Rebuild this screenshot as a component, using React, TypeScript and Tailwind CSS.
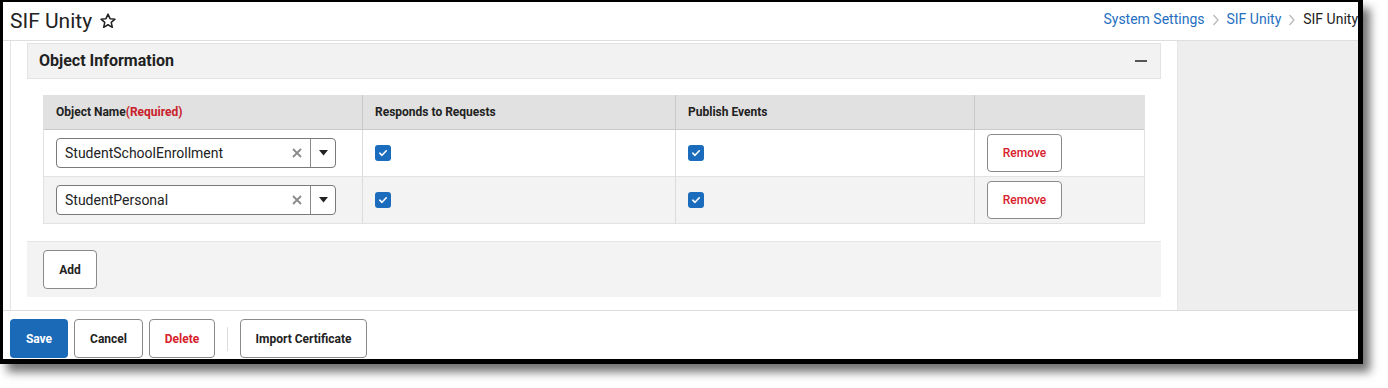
import React from "react";

const font = { fontFamily: "Roboto, 'Noto Sans', Arial, sans-serif" };

function Check() {
  return (
    <div className="w-[16px] h-[16px] rounded-[3px] bg-[#1c6cbd] flex items-center justify-center">
      <svg width="10" height="10" viewBox="0 0 10 10">
        <path d="M1.8 5.2 L4 7.3 L8.3 2.8" stroke="white" strokeWidth="1.6" fill="none" strokeLinecap="round" strokeLinejoin="round" />
      </svg>
    </div>
  );
}

function Select({ value }: { value: string }) {
  return (
    <div className="w-[280px] h-[30px] border border-[#7a7a7a] rounded-[4px] bg-white flex items-center">
      <div className="flex-1 pl-[8px] text-[14px] text-[#222]">{value}</div>
      <svg width="12" height="12" viewBox="0 0 12 12" className="mr-[7px]">
        <path d="M2 2 L10 10 M10 2 L2 10" stroke="#8a8a8a" strokeWidth="1.8" />
      </svg>
      <div className="w-px h-full bg-[#8a8a8a]" />
      <div className="w-[24px] flex items-center justify-center">
        <svg width="9" height="6" viewBox="0 0 9 6">
          <path d="M0 0 L9 0 L4.5 5.5 Z" fill="#222" />
        </svg>
      </div>
    </div>
  );
}

function RemoveBtn() {
  return (
    <button className="w-[75px] h-[38px] border border-[#8a8a8a] rounded-[4px] bg-white text-[12px] font-medium text-[#d7212c]">
      Remove
    </button>
  );
}

function Row({ name, bg }: { name: string; bg: string }) {
  return (
    <div className={`flex h-[47px] border-b border-[#e2e2e2] ${bg}`}>
      <div className="w-[319px] pl-[12px] flex items-center border-r border-[#dcdcdc]">
        <Select value={name} />
      </div>
      <div className="w-[313px] pl-[12px] flex items-center border-r border-[#dcdcdc]">
        <Check />
      </div>
      <div className="w-[299px] pl-[12px] flex items-center border-r border-[#dcdcdc]">
        <Check />
      </div>
      <div className="flex-1 pl-[12px] flex items-center">
        <RemoveBtn />
      </div>
    </div>
  );
}

export default function App() {
  return (
    <div className="w-[1388px] h-[388px] bg-white" style={font}>
      <div className="w-[1363px] h-[364px] border-black border-t-2 border-l-[3px] border-r-[5px] border-b-[5px] shadow-[7px_8px_9px_rgba(0,0,0,0.55)] bg-white flex flex-col overflow-hidden">
        {/* Header */}
        <div className="h-[39px] border-b border-[#dedede] flex items-center justify-between pl-[7px] pr-[0px] shrink-0">
          <div className="flex items-center gap-[7px]">
            <span className="text-[21px] text-[#222] leading-none">SIF Unity</span>
            <svg width="18" height="18" viewBox="0 0 24 24">
              <path
                d="M12 2.8 L14.7 8.9 L21.3 9.5 L16.3 13.9 L17.8 20.4 L12 17 L6.2 20.4 L7.7 13.9 L2.7 9.5 L9.3 8.9 Z"
                fill="none"
                stroke="#222"
                strokeWidth="2"
                strokeLinejoin="round"
              />
            </svg>
          </div>
          <div className="flex items-center text-[14px] mb-[3px]">
            <span className="text-[#1f6fc1]">System Settings</span>
            <svg width="8" height="12" viewBox="0 0 8 12" className="mx-[7px]">
              <path d="M1.5 1 L6 6 L1.5 11" stroke="#b8b8b8" strokeWidth="1.3" fill="none" />
            </svg>
            <span className="text-[#1f6fc1]">SIF Unity</span>
            <svg width="8" height="12" viewBox="0 0 8 12" className="mx-[7px]">
              <path d="M1.5 1 L6 6 L1.5 11" stroke="#b8b8b8" strokeWidth="1.3" fill="none" />
            </svg>
            <span className="text-[#222]">SIF Unity</span>
          </div>
        </div>

        {/* Main */}
        <div className="h-[270px] flex border-b border-[#dcdcdc] shrink-0">
          <div className="w-[8px] border-r border-[#e3e3e3]" />
          <div className="w-[1166px] px-[16px] pt-[2px]">
            <div className="h-[36px] border border-[#e3e3e3] bg-[#f2f2f2] flex items-center justify-between pl-[11px] pr-[12px]">
              <span className="text-[16px] font-bold text-[#222]">Object Information</span>
              <div className="w-[12px] h-[2px] bg-[#555] mr-[1px]" />
            </div>
            <div className="px-[16px] pt-[16px]">
              <div className="w-[1102px] border-l border-r border-[#e2e2e2]">
                <div className="flex h-[35px] bg-[#e1e1e1] border-b border-[#c9c9c9] text-[12px] font-bold text-[#222]">
                  <div className="w-[319px] pl-[12px] flex items-center border-r border-[#c9c9c9]">
                    Object Name<span className="text-[#c9202b]">(Required)</span>
                  </div>
                  <div className="w-[313px] pl-[12px] flex items-center border-r border-[#c9c9c9]">
                    Responds to Requests
                  </div>
                  <div className="w-[299px] pl-[12px] flex items-center border-r border-[#c9c9c9]">
                    Publish Events
                  </div>
                  <div className="flex-1" />
                </div>
                <Row name="StudentSchoolEnrollment" bg="bg-white" />
                <Row name="StudentPersonal" bg="bg-[#f3f3f3]" />
              </div>
            </div>
            <div className="mt-[17px] h-[56px] bg-[#f3f3f3] border-t border-[#e5e5e5] px-[16px] pt-[8px]">
              <button className="w-[54px] h-[39px] border border-[#8a8a8a] rounded-[4px] bg-white text-[12px] font-bold text-[#222]">
                Add
              </button>
            </div>
          </div>
          <div className="flex-1 bg-[#eeeeee] border-l border-[#e6e6e6]" />
        </div>

        {/* Footer */}
        <div className="flex items-center pl-[7px] pt-[8px] gap-[6px]">
          <button className="w-[58px] h-[39px] rounded-[4px] bg-[#1b6ab8] text-white text-[12px] font-bold">
            Save
          </button>
          <button className="w-[69px] h-[39px] border border-[#8a8a8a] rounded-[4px] bg-white text-[12px] font-bold text-[#222]">
            Cancel
          </button>
          <button className="w-[66px] h-[39px] border border-[#8a8a8a] rounded-[4px] bg-white text-[12px] font-bold text-[#d7212c]">
            Delete
          </button>
          <div className="w-px h-[24px] bg-[#dcdcdc] mx-[6px]" />
          <button className="w-[127px] h-[39px] border border-[#8a8a8a] rounded-[4px] bg-white text-[12px] font-bold text-[#222]">
            Import Certificate
          </button>
        </div>
      </div>
    </div>
  );
}
